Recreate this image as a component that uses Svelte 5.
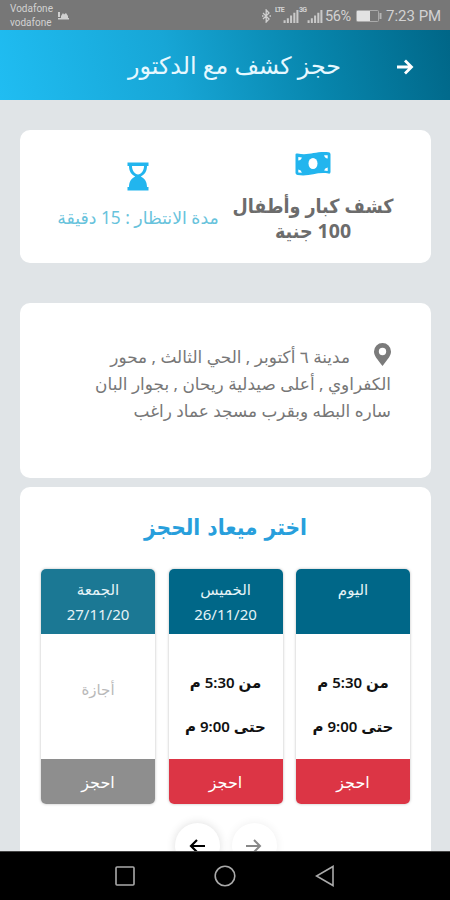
<script>
	const days = [
		{ name: 'اليوم', date: '', from: 'من 5:30 م', to: 'حتى 9:00 م' },
		{ name: 'الخميس', date: '26/11/20', from: 'من 5:30 م', to: 'حتى 9:00 م' },
		{ name: 'الجمعة', date: '27/11/20', off: true }
	]

	const address = [
		'مدينة ٦ أكتوبر , الحي الثالث , محور',
		'الكفراوي , أعلى صيدلية ريحان , بجوار البان',
		'ساره البطه وبقرب مسجد عماد راغب'
	]
</script>

{#snippet signal()}
	<svg width="16" height="13" viewBox="0 0 16 14" fill="#c9c9c9">
		<path d="M0 11h2.200v3H0zM3.500 9h2.200v5H3.500zM7 6h2.200v8H7zM10.500 3h2.200v11h-2.200zM13.800 0H16v14h-2.200z" />
	</svg>
{/snippet}

<div class="phone">
	<div class="status">
		<div class="carrier">
			<span>Vodafone</span>
			<span>vodafone</span>
		</div>
		<svg class="cast" width="11" height="8" viewBox="0 0 11 8" fill="#d0d0d0">
			<path d="M0 0h2v5H0zM3 4l2-3 1 1.500L8 1l2 3v2H3zM0 6h11v1.500H0z" />
		</svg>
		<div class="tray">
			<svg class="bt" width="9" height="14" viewBox="0 0 9 14" fill="none" stroke="#cfcfcf" stroke-width="1.300">
				<path d="M1 4l6 6-2.800 3V1L7 4l-6 6M0 7h1.500M7.500 7H9" />
			</svg>
			<span class="net">LTE</span>
			{@render signal()}
			<span class="net">3G</span>
			{@render signal()}
			<span class="percent">56%</span>
			<svg class="battery" width="26" height="12" viewBox="0 0 26 12">
				<rect x="0.500" y="0.500" width="22" height="11" rx="1" fill="none" stroke="#aaa" />
				<rect x="1" y="1" width="13" height="10" fill="#e2e2e2" />
				<rect x="23.500" y="3" width="2" height="6" fill="#b5b5b5" />
			</svg>
			<span class="clock">7:23 PM</span>
		</div>
	</div>

	<header>
		<h1>حجز كشف مع الدكتور</h1>
		<svg width="17" height="16" viewBox="0 0 17 16" fill="none" stroke="#fff" stroke-width="2.800">
			<path d="M0 8h14M8 1.500L14.500 8 8 14.500" />
		</svg>
	</header>

	<main>
		<section class="card info">
			<div class="price">
				<svg width="36" height="26" viewBox="0 0 36 26">
					<path fill="#22b5ee" d="M.5 3.500Q.5 2 2.500 2.500C14 5 20 0 33.500 1.200q2 .2 2 2V21q0 2-2 1.600C22 20.500 15 26 2.500 24q-2-.3-2-2z" />
					<ellipse cx="18" cy="12.500" rx="4.500" ry="5.600" fill="#fff" />
					<path fill="#fff" d="M3.300 6l3.600.5Q6 9.500 3.300 9.500zM32.700 4.200l-3.600.1q.5 3 3.600 3.200zM3.300 18.500q3 .5 3.600 3.200l-3.600-.3zM32.700 16.500q-3 .3-3.600 3l3.600.4z" />
				</svg>
				<p>كشف كبار وأطفال</p>
				<p class="fee">100 جنية</p>
			</div>
			<div class="wait">
				<svg width="22" height="29" viewBox="0 0 22 29">
					<path fill="#22b5ee" d="M.5.500h21v3.500h-1.500c0 6-3 9-6.200 10.500C17 16 20 19 20 25h1.500v3.500H.5V25H2c0-6 3-9 6.200-10.500C5 13 2 10 2 4H.5z" />
					<path fill="#fff" d="M5 4h12c0 4.500-3 8.500-6 8.500S5 8.500 5 4z" />
				</svg>
				<p>مدة الانتظار : 15 دقيقة</p>
			</div>
		</section>

		<section class="card address">
			<svg width="17" height="23" viewBox="0 0 17 23">
				<path fill="#7b7b7b" fill-rule="evenodd" d="M8.500 0A8.500 8.500 0 0 0 0 8.500C0 13 3 15.500 8.500 23 14 15.500 17 13 17 8.500A8.500 8.500 0 0 0 8.500 0zm0 4.800a3.700 3.700 0 1 1 0 7.400 3.700 3.700 0 0 1 0-7.400z" />
			</svg>
			{#each address as line}
				<p>{line}</p>
			{/each}
		</section>

		<section class="card booking">
			<h2>اختر ميعاد الحجز</h2>
			<div class="days">
				{#each days as day}
					<div class="day" class:off={day.off}>
						<div class="top">
							<span>{day.name}</span>
							<span class="date">{day.date}</span>
						</div>
						<div class="hours">
							{#if day.off}
								<span>أجازة</span>
							{:else}
								<span>{day.from}</span>
								<span>{day.to}</span>
							{/if}
						</div>
						<button>احجز</button>
					</div>
				{/each}
			</div>
			<div class="arrows">
				<div class="round faded">
					<svg width="16" height="14" viewBox="0 0 16 14" fill="none" stroke="#888" stroke-width="2">
						<path d="M0 7h14M8 1l6 6-6 6" />
					</svg>
				</div>
				<div class="round">
					<svg width="16" height="14" viewBox="0 0 16 14" fill="none" stroke="#000" stroke-width="2.200">
						<path d="M16 7H2M8 1L2 7l6 6" />
					</svg>
				</div>
			</div>
		</section>
	</main>

	<nav>
		<svg width="20" height="20" viewBox="0 0 20 20"><rect x="1" y="1" width="18" height="18" rx="1" /></svg>
		<svg width="22" height="22" viewBox="0 0 22 22"><circle cx="11" cy="11" r="9.800" /></svg>
		<svg width="20" height="22" viewBox="0 0 20 22"><path d="M18 1.500v19L1.500 11z" /></svg>
	</nav>
</div>

<style>
	:global(body) {
		margin: 0;
	}

	.phone {
		width: 450px;
		height: 900px;
		display: flex;
		flex-direction: column;
		overflow: hidden;
		background: #e0e4e7;
		font-family: "Noto Sans", "DejaVu Sans", sans-serif;
	}

	.phone * {
		box-sizing: border-box;
	}

	p, h1, h2 {
		margin: 0;
		white-space: nowrap;
	}

	svg {
		display: block;
		flex: none;
	}

	.status {
		flex: none;
		height: 30px;
		display: flex;
		align-items: center;
		padding: 2px 9px 0 10px;
		background: #777;
		color: #d2d2d2;
		font-family: Roboto, sans-serif;
	}

	.carrier {
		display: flex;
		flex-direction: column;
		width: 43px;
		font-size: 10px;
		line-height: 14px;
	}

	.cast {
		margin-left: 5px;
	}

	.tray {
		flex: 1;
		display: flex;
		justify-content: flex-end;
		align-items: center;
		height: 26px;
	}

	.bt {
		margin-right: 4px;
	}

	.net {
		align-self: flex-start;
		margin-top: 3px;
		width: 8px;
		font-size: 7px;
		font-weight: 700;
		letter-spacing: -0.8px;
	}

	.percent {
		margin-left: 2px;
		width: 28px;
		font-size: 14.5px;
		letter-spacing: -0.4px;
	}

	.battery {
		margin-left: 3px;
	}

	.clock {
		margin-left: 4px;
		width: 55px;
		font-size: 15px;
		white-space: nowrap;
	}

	header {
		flex: none;
		direction: rtl;
		height: 70px;
		display: flex;
		align-items: center;
		justify-content: space-between;
		flex-direction: row-reverse;
		padding: 3px 36px 0 128px;
		background: linear-gradient(75deg, #20bdf2 0%, #17a6d6 38%, #0785ac 70%, #006687 100%);
	}

	header h1 {
		margin-top: -4px;
		color: #e6f8ff;
		font-size: 23.8px;
		font-weight: 400;
	}

	main {
		flex: 1;
		min-height: 0;
		overflow: hidden;
		direction: rtl;
		padding: 30px 19px 0 20px;
	}

	.card {
		background: #fff;
		border-radius: 10px;
	}

	.info {
		height: 133px;
		display: flex;
		padding: 0 37px;
		justify-content: space-between;
	}

	.price, .wait {
		display: flex;
		flex-direction: column;
		align-items: center;
		width: 162px;
	}

	.price {
		padding-top: 21px;
		color: #6c6c6c;
		font-family: "Noto Sans", "DejaVu Sans Condensed", "DejaVu Sans", sans-serif;
		font-size: 19.5px;
		font-weight: 700;
		line-height: 25px;
	}

	.price p:first-of-type {
		margin-top: 16px;
	}

	.wait {
		padding-top: 32px;
		color: #68c3dc;
		font-size: 17.3px;
		line-height: 24px;
	}

	.wait p {
		margin-top: 15px;
	}

	.address {
		height: 175px;
		margin-top: 40px;
		padding: 40px 40px 0 0;
		color: #777;
		font-size: 16.9px;
		line-height: 27px;
	}

	.address svg {
		float: right;
		margin-left: 24px;
	}

	.booking {
		margin-top: 9px;
		height: 400px;
		padding: 23px 21px 0;
	}

	h2 {
		color: #289fdc;
		font-family: "DejaVu Sans Condensed", "DejaVu Sans", sans-serif;
		font-size: 22.5px;
		line-height: 34px;
		text-align: center;
	}

	.days {
		display: flex;
		justify-content: space-between;
		margin-top: 25px;
	}

	.day {
		width: 114px;
		height: 235px;
		display: flex;
		flex-direction: column;
		border-radius: 5px;
		overflow: hidden;
		background: #fff;
		box-shadow: 0 0 3px #bbb;
	}

	.top {
		height: 65px;
		display: flex;
		flex-direction: column;
		align-items: center;
		padding-top: 8px;
		background: #006788;
		color: #e5f3f7;
		font-size: 15px;
		line-height: 25px;
	}

	.off .top {
		background: #1b7894;
	}

	.hours {
		flex: 1;
		display: flex;
		flex-direction: column;
		align-items: center;
		justify-content: center;
		gap: 20px;
		padding-top: 14px;
		color: #111;
		font-size: 15px;
		font-weight: 600;
		line-height: 24px;
		white-space: nowrap;
	}

	.off .hours {
		padding: 0 0 15px;
		color: #b9b9b9;
		font-weight: 400;
	}

	button {
		height: 45px;
		border: 0;
		background: #dc3545;
		color: #fff;
		font-family: inherit;
		font-size: 16px;
	}

	.off button {
		background: #8e8e8e;
	}

	.arrows {
		display: flex;
		justify-content: center;
		gap: 12px;
		margin-top: 19px;
	}

	.round {
		width: 45px;
		height: 45px;
		display: flex;
		align-items: center;
		justify-content: center;
		border-radius: 50%;
		background: #fff;
		box-shadow: 0 0 10px #ddd;
	}

	.faded {
		box-shadow: 0 0 10px #eee;
	}

	nav {
		flex: none;
		height: 49px;
		display: flex;
		align-items: center;
		justify-content: space-between;
		padding: 0 115px;
		border-top: 1px solid #444;
		background: #000;
	}

	nav svg {
		fill: none;
		stroke: #aaa;
		stroke-width: 1.6;
	}
</style>
